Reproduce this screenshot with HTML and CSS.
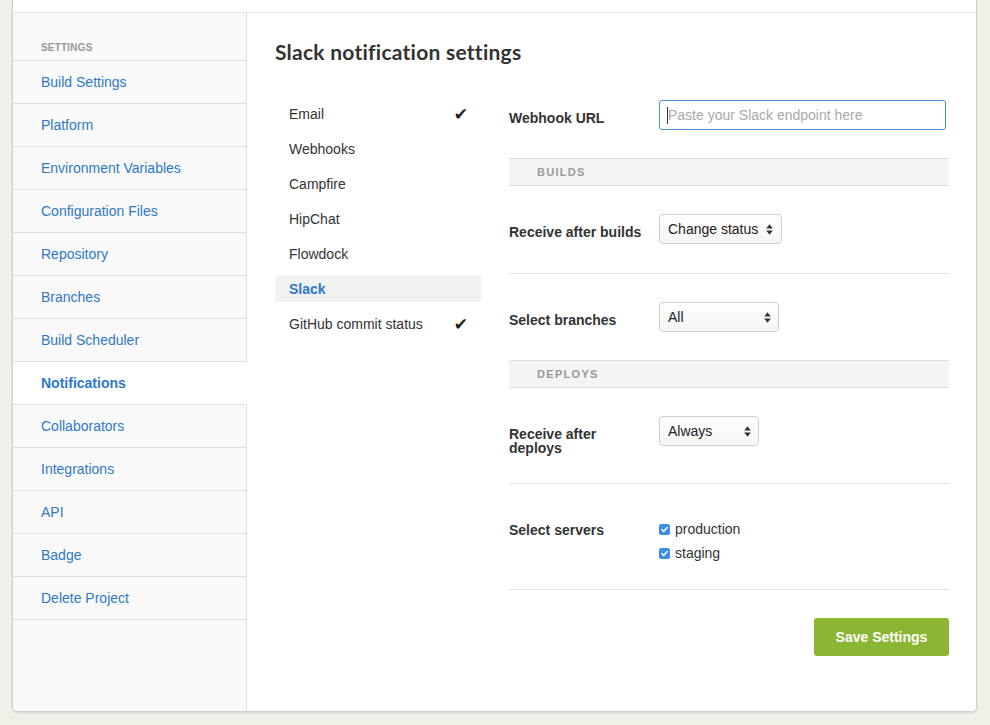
FILE: index.html
```
<!DOCTYPE html>
<html>
<head>
<meta charset="utf-8">
<link rel="stylesheet" href="styles.css">
</head>
<body>
<div class="card">
  <div class="topstrip"></div>
  <div class="layout">
    <nav class="sidebar">
      <div class="side-head">SETTINGS</div>
      <a class="side-item">Build Settings</a>
      <a class="side-item">Platform</a>
      <a class="side-item">Environment Variables</a>
      <a class="side-item">Configuration Files</a>
      <a class="side-item">Repository</a>
      <a class="side-item">Branches</a>
      <a class="side-item">Build Scheduler</a>
      <a class="side-item active">Notifications</a>
      <a class="side-item">Collaborators</a>
      <a class="side-item">Integrations</a>
      <a class="side-item">API</a>
      <a class="side-item">Badge</a>
      <a class="side-item">Delete Project</a>
    </nav>
    <main class="main">
      <h1 class="title">Slack notification settings</h1>
      <div class="columns">
        <ul class="subnav">
          <li class="sub-item"><span>Email</span><span class="check">✔</span></li>
          <li class="sub-item"><span>Webhooks</span></li>
          <li class="sub-item"><span>Campfire</span></li>
          <li class="sub-item"><span>HipChat</span></li>
          <li class="sub-item"><span>Flowdock</span></li>
          <li class="sub-item active"><span>Slack</span></li>
          <li class="sub-item"><span>GitHub commit status</span><span class="check">✔</span></li>
        </ul>
        <form class="form">
          <div class="row row-first">
            <div class="label">Webhook URL</div>
            <div class="input"><span class="caret"></span><span class="placeholder">Paste your Slack endpoint here</span></div>
          </div>
          <div class="bar">BUILDS</div>
          <div class="row row-builds">
            <div class="label">Receive after builds</div>
            <div class="select w-builds"><span>Change status</span>
              <svg width="7" height="11" viewBox="0 0 7 11"><path d="M3.5 0.3 L6.8 4.4 H0.2 Z M3.5 10.7 L6.8 6.6 H0.2 Z" fill="#333"/></svg></div>
          </div>
          <div class="row">
            <div class="label">Select branches</div>
            <div class="select w-branches"><span>All</span>
              <svg width="7" height="11" viewBox="0 0 7 11"><path d="M3.5 0.3 L6.8 4.4 H0.2 Z M3.5 10.7 L6.8 6.6 H0.2 Z" fill="#333"/></svg></div>
          </div>
          <div class="bar bar-joined">DEPLOYS</div>
          <div class="row">
            <div class="label label-wrap">Receive after<br>deploys</div>
            <div class="select w-deploys"><span>Always</span>
              <svg width="7" height="11" viewBox="0 0 7 11"><path d="M3.5 0.3 L6.8 4.4 H0.2 Z M3.5 10.7 L6.8 6.6 H0.2 Z" fill="#333"/></svg></div>
          </div>
          <div class="row row-servers">
            <div class="label">Select servers</div>
            <div class="checklist">
              <div class="cb-row"><svg class="cb" width="11" height="11" viewBox="0 0 11 11"><rect x="0" y="0" width="11" height="11" rx="2.5" fill="#3c8ce7"/><path d="M2.8 5.6 L4.7 7.5 L8.3 3.6" stroke="#fff" stroke-width="1.5" fill="none" stroke-linecap="round" stroke-linejoin="round"/></svg><span>production</span></div>
              <div class="cb-row"><svg class="cb" width="11" height="11" viewBox="0 0 11 11"><rect x="0" y="0" width="11" height="11" rx="2.5" fill="#3c8ce7"/><path d="M2.8 5.6 L4.7 7.5 L8.3 3.6" stroke="#fff" stroke-width="1.5" fill="none" stroke-linecap="round" stroke-linejoin="round"/></svg><span>staging</span></div>
            </div>
          </div>
          <div class="actions">
            <button type="button" class="save">Save Settings</button>
          </div>
        </form>
      </div>
    </main>
  </div>
</div>
</body>
</html>
```
FILE: styles.css
```
* { box-sizing: border-box; }
html, body { margin: 0; padding: 0; }
body {
  background: #f0efe8;
  font-family: "Liberation Sans", Arial, sans-serif;
  font-size: 14px;
  color: #333;
  height: 725px;
  overflow: hidden;
}
.card {
  margin-left: 12px;
  width: 965px;
  height: 712px;
  background: #fff;
  border-left: 1px solid #d2d0c6;
  border-right: 1px solid #d2d0c6;
  border-bottom: 1px solid #cfcfcf;
  border-radius: 0 0 5px 5px;
  box-shadow: 0 1px 2px rgba(0,0,0,0.12);
  display: flex;
  flex-direction: column;
}
.topstrip {
  height: 13px;
  border-bottom: 1px solid #e3e3e3;
  flex: none;
}
.layout {
  flex: 1;
  display: flex;
  min-height: 0;
}
.sidebar {
  width: 234px;
  flex: none;
  background: #f9f9f9;
  border-right: 1px solid #dcdcdc;
  border-bottom-left-radius: 5px;
  display: flex;
  flex-direction: column;
}
.side-head {
  height: 48px;
  padding: 29px 0 0 28px;
  font-size: 10px;
  font-weight: bold;
  color: #999;
  letter-spacing: 0.2px;
  border-bottom: 1px solid #e0e0e0;
}
.side-item {
  display: flex;
  align-items: center;
  height: 43px;
  padding-left: 28px;
  color: #2f79c4;
  border-bottom: 1px solid #e0e0e0;
  margin-right: -1px;
  border-right: 1px solid #dcdcdc;
  cursor: pointer;
}
.side-item.active {
  background: #fff;
  font-weight: bold;
  border-right-color: #fff;
}
.main {
  flex: 1;
  padding: 28px 27px 0 28px;
}
.title {
  margin: 0 0 37px 0;
  font-family: Lato, "Open Sans", sans-serif;
  font-weight: 700;
  font-size: 21px;
  letter-spacing: 0.25px;
  line-height: 22px;
  color: #333;
}
.columns {
  display: flex;
  gap: 28px;
}
.subnav {
  list-style: none;
  margin: 0;
  padding: 0;
  width: 206px;
  flex: none;
  display: flex;
  flex-direction: column;
  gap: 8px;
}
.sub-item {
  height: 27px;
  padding: 0 13px 0 14px;
  display: flex;
  align-items: center;
  justify-content: space-between;
  border-radius: 3px;
  color: #333;
}
.sub-item.active {
  background: #f2f2f2;
  color: #2f79c4;
  font-weight: bold;
}
.check {
  font-family: "DejaVu Sans", sans-serif;
  font-size: 17px;
  color: #222;
}
.form {
  flex: 1;
  display: flex;
  flex-direction: column;
}
.row {
  display: flex;
  align-items: flex-start;
  padding: 28px 0 28px 0;
  border-bottom: 1px solid #e2e2e2;
}
.row-builds { padding-bottom: 29px; }
.row-servers { padding-bottom: 27px; }
.row-first {
  padding-top: 0;
  padding-bottom: 28px;
  border-bottom: none;
}
.label {
  width: 150px;
  flex: none;
  font-weight: bold;
  line-height: 14px;
  padding-top: 11px;
  color: #333;
}
.input {
  width: 287px;
  height: 30px;
  border: 1px solid #4a90d9;
  border-radius: 3px;
  display: flex;
  align-items: center;
  padding-left: 7px;
  color: #a9a9a9;
}
.caret {
  width: 1px;
  height: 17px;
  background: #333;
}
.bar {
  height: 28px;
  background: #f4f4f4;
  border-top: 1px solid #dedede;
  border-bottom: 1px solid #dedede;
  padding-left: 28px;
  font-size: 11px;
  font-weight: bold;
  letter-spacing: 1.3px;
  color: #999;
  display: flex;
  align-items: center;
}
.bar-joined {
  height: 27px;
  border-top: none;
}
.select {
  height: 30px;
  border: 1px solid #cfcfcf;
  border-radius: 4px;
  background: linear-gradient(#fefefe, #f5f5f5);
  display: flex;
  align-items: center;
  justify-content: space-between;
  padding: 0 7px 1px 8px;
  color: #222;
}
.select svg { margin-top: 1px; }
.w-builds { width: 123px; padding-right: 8px; }
.w-branches { width: 120px; }
.w-deploys { width: 100px; }
.checklist {
  padding-top: 9px;
  display: flex;
  flex-direction: column;
  gap: 7px;
}
.cb-row {
  display: flex;
  align-items: center;
  gap: 5px;
  line-height: 17px;
  color: #333;
}
.actions {
  display: flex;
  justify-content: flex-end;
  padding-top: 28px;
}
.save {
  width: 135px;
  height: 38px;
  background: #8bb634;
  color: #fff;
  font-family: "Liberation Sans", Arial, sans-serif;
  font-weight: bold;
  font-size: 14px;
  border: none;
  border-radius: 3px;
  cursor: pointer;
}
```
